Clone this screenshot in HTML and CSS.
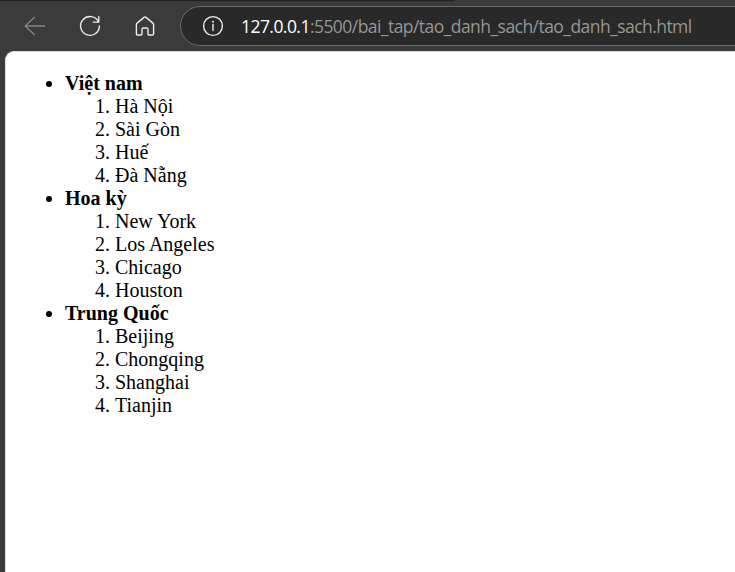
FILE: index.html
```html
<!DOCTYPE html>
<html lang="vi">
<head>
<meta charset="utf-8">
<title>Document</title>
<link rel="stylesheet" href="styles.css">
</head>
<body>
<div class="tabstrip"></div>
<header class="toolbar">
  <svg class="icon back" viewBox="0 0 24 24"><path d="M21.5 12H2.2M11.2 3.4 2.2 12l9 8.6"/></svg>
  <svg class="icon" viewBox="0 0 24 24"><path d="M20.5 7.9A9.4 9.4 0 1 0 21.4 12M20.8 2.6v5.500h-5.500"/></svg>
  <svg class="icon" viewBox="0 0 24 24"><path d="M11 3.400a1.600 1.600 0 0 1 2 0l6.900 5.700c.5.4.7.9.7 1.500v9.200c0 .7-.5 1.200-1.200 1.200h-3.200c-.7 0-1.200-.5-1.200-1.200v-4.600c0-.7-.5-1.200-1.200-1.200h-3.600c-.7 0-1.200.5-1.200 1.200v4.600c0 .7-.5 1.200-1.200 1.200H4.600c-.7 0-1.200-.5-1.200-1.200v-9.200c0-.6.2-1.100.7-1.500z"/></svg>
  <div class="address">
    <svg class="icon info" viewBox="0 0 24 24"><circle cx="12" cy="12" r="9.4"/><path d="M12 10.500v6"/><circle class="dot" cx="12" cy="7.700" r="1"/></svg>
    <div class="url"><span class="host">127.0.0.1</span><span class="path">:5500/bai_tap/tao_danh_sach/tao_danh_sach.html</span></div>
  </div>
</header>
<main class="page">
  <ul>
    <li><b>Việt nam</b>
      <ol><li>Hà Nội</li><li>Sài Gòn</li><li>Huế</li><li>Đà Nẵng</li></ol>
    </li>
    <li><b>Hoa kỳ</b>
      <ol><li>New York</li><li>Los Angeles</li><li>Chicago</li><li>Houston</li></ol>
    </li>
    <li><b>Trung Quốc</b>
      <ol><li>Beijing</li><li>Chongqing</li><li>Shanghai</li><li>Tianjin</li></ol>
    </li>
  </ul>
</main>
</body>
</html>
```
FILE: styles.css
```css
* { box-sizing: border-box; }
body {
  margin: 0;
  height: 572px;
  overflow: hidden;
  display: flex;
  flex-direction: column;
  background: #3b3b3b;
}
.tabstrip {
  height: 1px;
  width: 455px;
  background: #202020;
  flex: none;
}
.toolbar {
  height: 50px;
  flex: none;
  display: flex;
  align-items: center;
  padding-left: 23px;
}
.icon {
  width: 24px;
  height: 24px;
  flex: none;
  margin-right: 31px;
  fill: none;
  stroke: #ececec;
  stroke-width: 1.4;
  stroke-linecap: round;
  stroke-linejoin: round;
}
.back { stroke: #858585; }
.address {
  flex: 1;
  height: 40px;
  margin-left: -8px;
  margin-right: -24px;
  padding-left: 20px;
  display: flex;
  align-items: center;
  border: 1px solid #6b6b6b;
  border-radius: 20px;
  background: #292929;
}
.info { margin-right: 16px; }
.dot { fill: #ececec; stroke: none; }
.url {
  font: 17.5px/24px "Open Sans", sans-serif;
  white-space: nowrap;
  color: #969696;
}
.host { color: #fff; letter-spacing: -0.55px; }
.path { letter-spacing: -0.55px; }
.page {
  flex: 1;
  margin-left: 5px;
  padding: 20px 9px;
  border-top-left-radius: 9px;
  border-left: 1px solid #ddd;
  border-top: 1px solid #ddd;
  background: #fff;
  font: 20px/23px "Liberation Serif", serif;
  color: #000;
}
.page ul { margin: 0; padding-left: 50px; }
.page ol { margin: 0; padding-left: 50px; }
```
